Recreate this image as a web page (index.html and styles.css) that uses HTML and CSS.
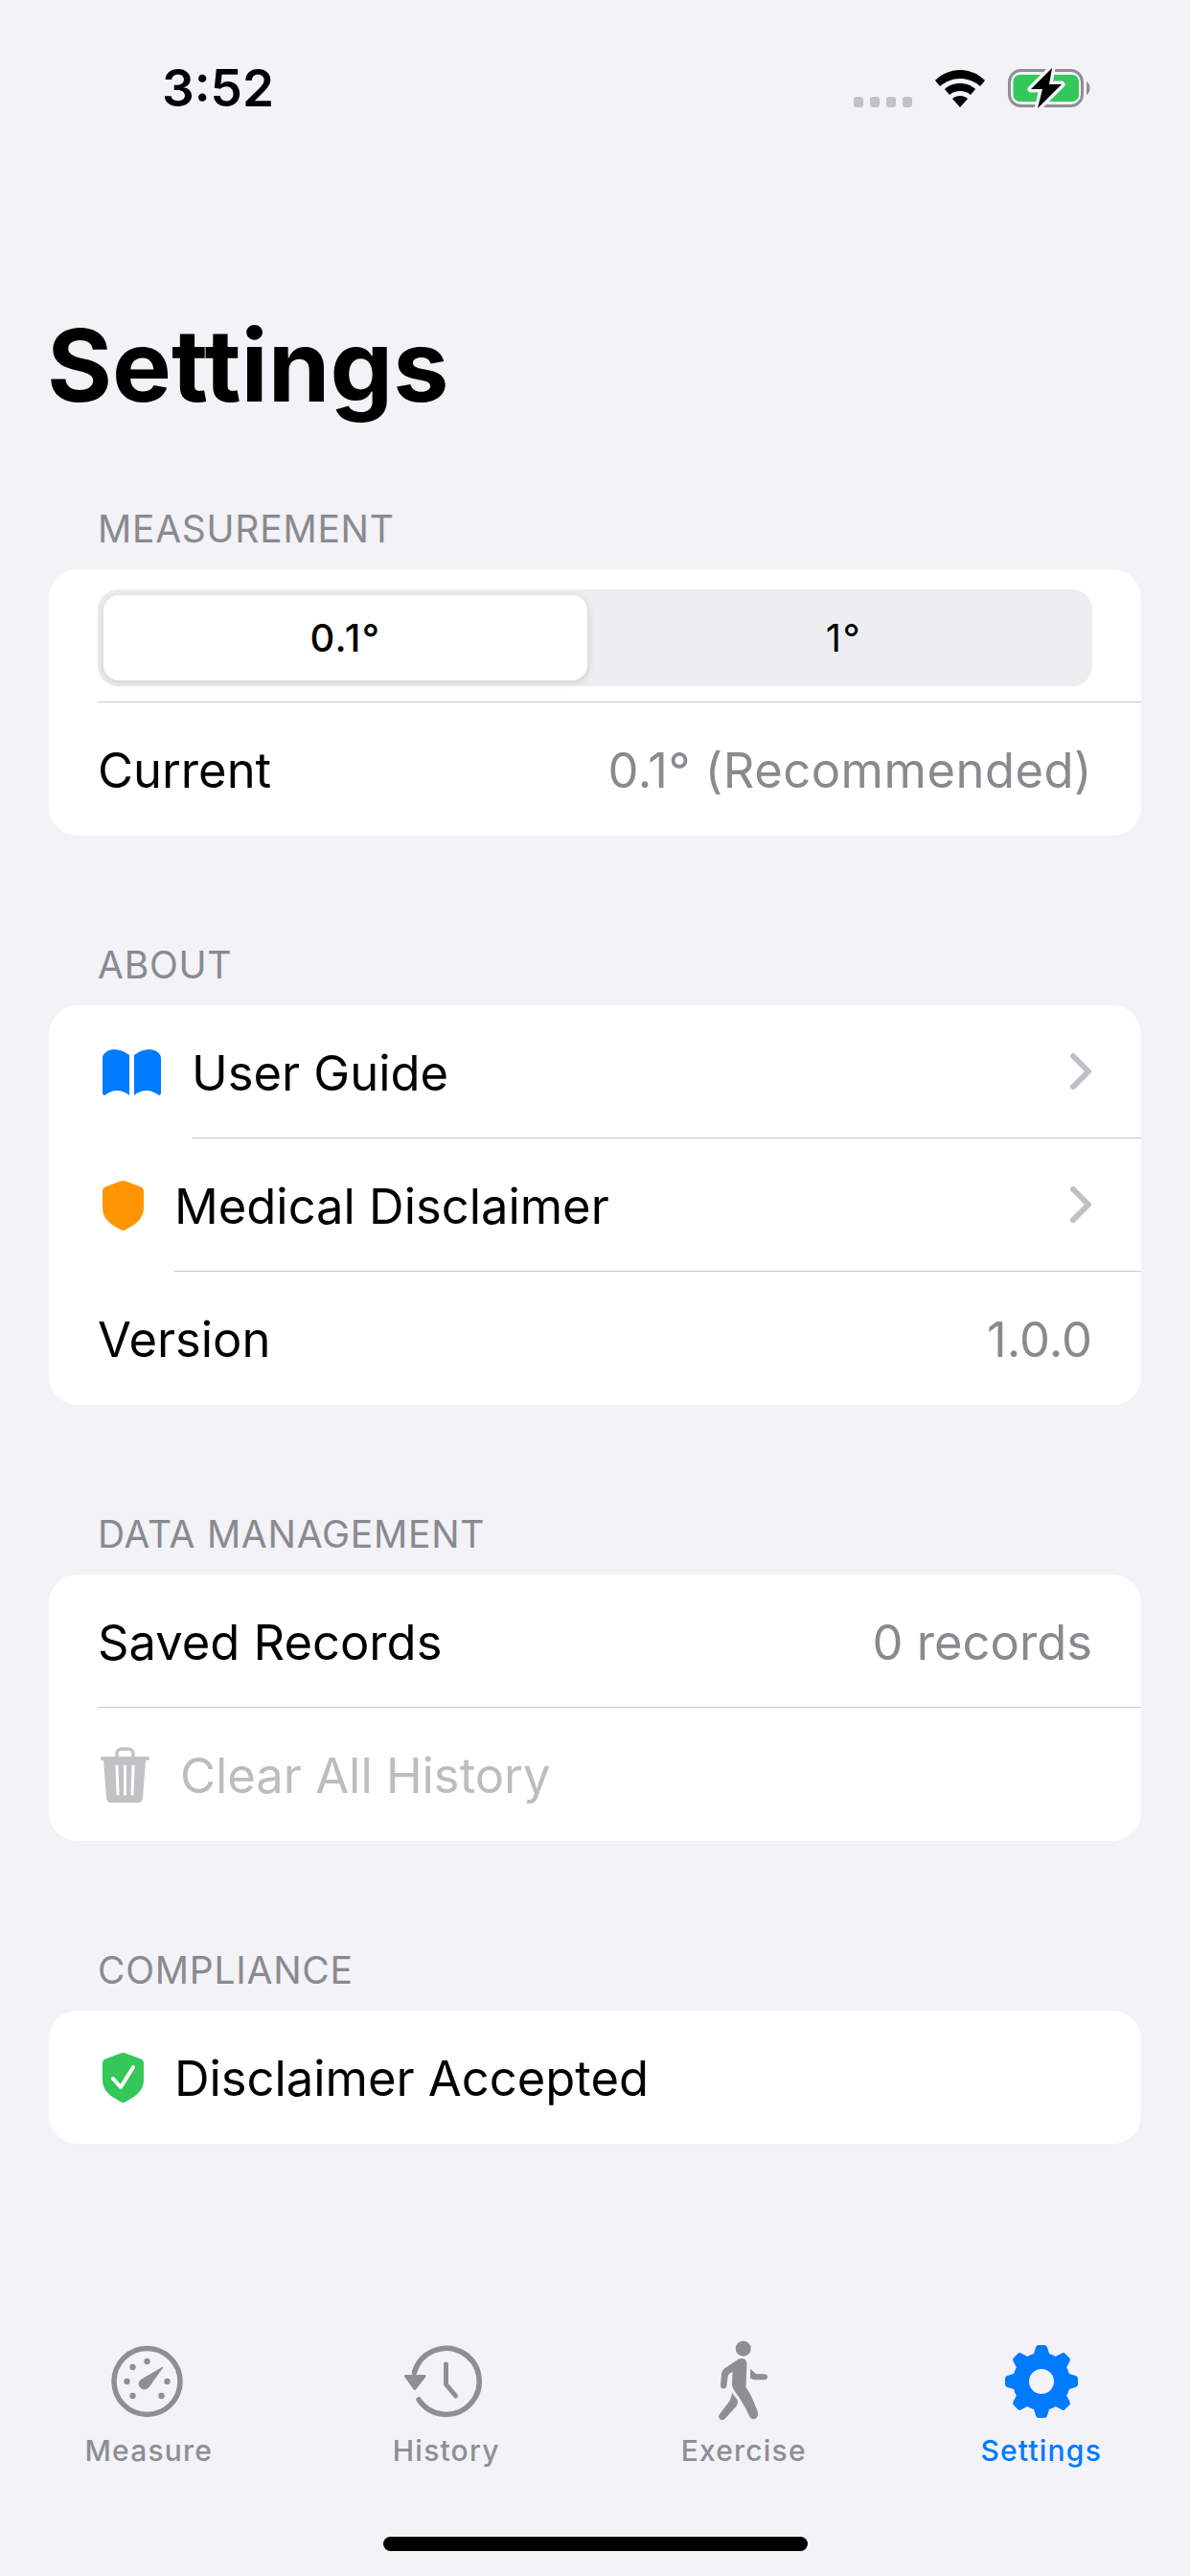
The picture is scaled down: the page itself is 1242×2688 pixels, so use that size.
FILE: index.html
```html
<!DOCTYPE html>
<html lang="en">
<head>
  <meta charset="UTF-8" />
  <title>Settings</title>
  <link rel="stylesheet" href="styles.css">
</head>
<body>
  <div class="statusBar">
    <span class="time">3:52</span>
    <div class="statusIcons">
      <div class="signal"><i></i><i></i><i></i><i></i></div>
      <svg class="wifi" viewBox="0 0 52 39">
        <path d="M26 0C16 0 7 4 0 11l5 6c6-5 13-8 21-8s15 3 21 8l5-6C45 4 36 0 26 0z"/>
        <path d="M26 14c-6 0-12 2-16 6l5 6c3-3 7-4 11-4s8 1 11 4l5-6c-4-4-10-6-16-6z"/>
        <path d="M26 27c-3 0-6 1-8 3l8 9 8-9c-2-2-5-3-8-3z"/>
      </svg>
      <svg class="battery" viewBox="0 0 86 42">
        <rect x="1.500" y="2.500" width="76" height="37" rx="12" fill="none" stroke="#8e8e93" stroke-width="3"/>
        <path d="M82 14c2 1 3.500 4 3.500 7s-1.500 6-3.500 7z" fill="#8e8e93"/>
        <rect x="5.500" y="7" width="68.500" height="28" rx="7" fill="#34c759"/>
        <path d="M46 0L24 22h12L31 42l25-25H43z" fill="#000" stroke="#f2f2f7" stroke-width="7" stroke-linejoin="round"/>
        <path d="M46 0L24 22h12L31 42l25-25H43z" fill="#000"/>
      </svg>
    </div>
  </div>

  <h1 class="title">Settings</h1>

  <section class="group">
    <h2 class="groupTitle">Measurement</h2>
    <div class="card">
      <div class="segmentRow">
        <div class="segment">
          <div class="segItem selected"><div class="segPill">0.1°</div></div>
          <div class="segItem">1°</div>
        </div>
      </div>
      <div class="row">
        <div class="rowBody topLine"><span>Current</span><span class="value wide">0.1° (Recommended)</span></div>
      </div>
    </div>
  </section>

  <section class="group">
    <h2 class="groupTitle">About</h2>
    <div class="card">
      <div class="row">
        <svg class="rowIcon book" viewBox="0 0 61 48">
          <path d="M28 6C23 2 18 0 12 0 6 0 0 4 0 9v36c0 2 1 3 2 3 4-3 8-5 13-5 5 0 10 2 13 5z"/>
          <path d="M33 6c5-4 10-6 16-6 6 0 12 4 12 9v36c0 2-1 3-2 3-4-3-8-5-13-5-5 0-10 2-13 5z"/>
        </svg>
        <div class="rowBody line">
          <span>User Guide</span>
          <svg class="chevron" viewBox="0 0 24 40"><path d="M4 4l16 16L4 36"/></svg>
        </div>
      </div>
      <div class="row">
        <svg class="rowIcon shield" viewBox="0 0 43 52">
          <path fill="#ff9500" d="M21.500 0c1 0 2 .3 3 .7l15 5.500c2.200.8 3.500 2.300 3.500 4.800v17c0 8-4 14-11 18.500l-9 5.200c-1 .4-2 .4-3 0l-9-5.200C4 42 0 36 0 28V11c0-2.500 1.300-4 3.500-4.800l15-5.500c1-.4 2-.7 3-.7z"/>
        </svg>
        <div class="rowBody line">
          <span>Medical Disclaimer</span>
          <svg class="chevron" viewBox="0 0 24 40"><path d="M4 4l16 16L4 36"/></svg>
        </div>
      </div>
      <div class="row">
        <div class="rowBody"><span>Version</span><span class="value">1.0.0</span></div>
      </div>
    </div>
  </section>

  <section class="group">
    <h2 class="groupTitle">Data Management</h2>
    <div class="card">
      <div class="row">
        <div class="rowBody line"><span>Saved Records</span><span class="value">0 records</span></div>
      </div>
      <div class="row">
        <svg class="rowIcon trash" viewBox="0 0 51 58">
          <path fill="none" stroke="#c2c2c4" stroke-width="3.500" d="M17 12V7c0-3 2-5 5-5h7c3 0 5 2 5 5v5"/>
          <path fill="#c2c2c4" d="M2 10h47c1.500 0 2 .8 2 2s-.5 2-2 2h-2l-3 39c-.2 3-2 5-5 5H11c-3 0-4.800-2-5-5L3 14H2c-1.500 0-2-.8-2-2s.5-2 2-2z"/>
          <path stroke="#fff" stroke-width="3" stroke-linecap="round" d="M17 20l1 29M25.500 20v29M34 20l-1 29"/>
        </svg>
        <div class="rowBody"><span class="disabled">Clear All History</span></div>
      </div>
    </div>
  </section>

  <section class="group">
    <h2 class="groupTitle">Compliance</h2>
    <div class="card">
      <div class="row">
        <svg class="rowIcon shield" viewBox="0 0 43 52">
          <path fill="#34c759" d="M21.500 0c1 0 2 .3 3 .7l15 5.500c2.200.8 3.500 2.300 3.500 4.800v17c0 8-4 14-11 18.500l-9 5.200c-1 .4-2 .4-3 0l-9-5.200C4 42 0 36 0 28V11c0-2.500 1.300-4 3.500-4.800l15-5.500c1-.4 2-.7 3-.7z"/>
          <path fill="none" stroke="#fff" stroke-width="4" stroke-linecap="round" stroke-linejoin="round" d="M11 27l8 9 13-21"/>
        </svg>
        <div class="rowBody"><span>Disclaimer Accepted</span></div>
      </div>
    </div>
  </section>

  <nav class="tabBar">
    <div class="tab">
      <svg class="tabIcon" viewBox="0 0 90 90">
        <circle cx="43.500" cy="45" r="34.500" fill="none" stroke="#8e8e93" stroke-width="5.500"/>
        <circle cx="43.500" cy="24" r="3.200"/><circle cx="28.500" cy="30" r="3.200"/>
        <circle cx="22.500" cy="45" r="3.200"/><circle cx="64.500" cy="45" r="3.200"/><circle cx="28.500" cy="60" r="3.200"/><circle cx="58.500" cy="60" r="3.200"/>
        <path d="M60 30L45.500 50.500c-2 3-6.500 3-8.500 1-2.500-2-2.500-6 0-8z" stroke="#8e8e93" stroke-width="1" stroke-linejoin="round"/>
      </svg>
      <span>Measure</span>
    </div>
    <div class="tab">
      <svg class="tabIcon" viewBox="0 0 90 90">
        <path fill="none" stroke="#8e8e93" stroke-width="5.500" stroke-linecap="round" d="M11.500 35.500A34.500 34.500 0 1 1 16 64"/>
        <path d="M2 38h20c1.500 0 2 1 1.500 2L13 53.500c-.6.800-1.600.8-2.200 0L1 40c-.5-1 0-2 1-2z"/>
        <path fill="none" stroke="#8e8e93" stroke-width="5" stroke-linecap="round" stroke-linejoin="round" d="M44.500 27v21l10 12"/>
      </svg>
      <span>History</span>
    </div>
    <div class="tab">
      <svg class="tabIcon" viewBox="0 0 90 90">
        <circle cx="44.750" cy="10.700" r="8"/>
        <path d="M40 21.500c4-1.500 8.500 0 8.500 5L47.500 51c5 7 8 14 12 25 1.200 3 .5 6.500-2.500 8-2.800 1-5-.5-6.200-3.500C47 72 42 63 36 55.500 33.500 52 33 50 33 47l.5-12C30 36 28.500 38 28.500 41l-1 8c0 2.500-1.500 3.500-3.500 3.500S21 51 21 48.500L22 38c.3-3 1-4.500 3-6.500z"/>
        <path d="M52 31.700l5 4.600c.8.700 1.500 1 2.500 1h7c2 0 3.500 1.200 3.500 3s-1.500 3-3.500 3H57c-2 0-3.500-.5-5-2z"/>
        <path d="M33 57c2 2.500 4 5 5.500 7 1 2.500.5 5-1.500 7.500L25.500 84c-1.500 1.500-3.500 1.500-5 .3s-2-3.500-.5-5L28.500 68c2.500-3 4-6.500 4.500-11z"/>
      </svg>
      <span>Exercise</span>
    </div>
    <div class="tab active">
      <svg class="tabIcon gear" viewBox="0 0 90 90">
        <circle cx="45" cy="45" r="21.500" fill="none" stroke="#007aff" stroke-width="17"/>
        <path d="M36 19l3-9.500Q39.500 7 42 7h6q2.500 0 3 2.500l3 9.500z"/>
        <path transform="rotate(45 45 45)" d="M36 19l3-9.500Q39.500 7 42 7h6q2.500 0 3 2.500l3 9.500z"/>
        <path transform="rotate(90 45 45)" d="M36 19l3-9.500Q39.500 7 42 7h6q2.500 0 3 2.500l3 9.500z"/>
        <path transform="rotate(135 45 45)" d="M36 19l3-9.500Q39.500 7 42 7h6q2.500 0 3 2.500l3 9.500z"/>
        <path transform="rotate(180 45 45)" d="M36 19l3-9.500Q39.500 7 42 7h6q2.500 0 3 2.500l3 9.500z"/>
        <path transform="rotate(225 45 45)" d="M36 19l3-9.500Q39.500 7 42 7h6q2.500 0 3 2.500l3 9.500z"/>
        <path transform="rotate(270 45 45)" d="M36 19l3-9.500Q39.500 7 42 7h6q2.500 0 3 2.500l3 9.500z"/>
        <path transform="rotate(315 45 45)" d="M36 19l3-9.500Q39.500 7 42 7h6q2.500 0 3 2.500l3 9.500z"/>
      </svg>
      <span>Settings</span>
    </div>
  </nav>

  <div class="homeIndicator"></div>
</body>
</html>
```

FILE: styles.css
```css
* {
  box-sizing: border-box;
}
body {
  margin: 0;
  height: 2688px;
  overflow: hidden;
  display: flex;
  flex-direction: column;
  background: #f2f2f7;
  color: #000;
  font-family: 'Inter', 'Liberation Sans', sans-serif;
  font-size: 50.7px;
}
.statusBar {
  display: flex;
  justify-content: space-between;
  align-items: flex-start;
  height: 116px;
  padding: 62px 104px 0 169px;
}
.time {
  font-size: 53px;
  font-weight: 600;
  line-height: 60px;
}
.statusIcons {
  display: flex;
  align-items: flex-end;
  gap: 24px;
  height: 51px;
}
.signal {
  display: flex;
  gap: 7px;
  margin-bottom: 1px;
}
.signal i {
  display: block;
  width: 10px;
  height: 11px;
  border-radius: 3px;
  background: #c1c1c6;
}
.wifi {
  width: 52px;
  height: 39px;
  margin-bottom: 1px;
}
.battery {
  width: 86px;
  height: 42px;
}
.title {
  margin: 0;
  padding: 203px 0 0 49px;
  font-size: 104px;
  font-weight: 700;
  line-height: 124px;
}
.group {
  margin: 0 51px 110px;
}
.title + .group {
  margin-top: 84px;
}
.groupTitle {
  margin: 0 0 19px 51px;
  padding-top: 2px;
  font-size: 39px;
  font-weight: 400;
  line-height: 46px;
  letter-spacing: 0.75px;
  color: #8a8a8e;
  text-transform: uppercase;
}
.card {
  background: #fff;
  border-radius: 30px;
  overflow: hidden;
}
.segmentRow {
  padding: 21px 51px 16px;
}
.segment {
  display: flex;
  height: 101px;
  background: #eeeef0;
  border-radius: 21px;
}
.segItem {
  flex: 1 1 50%;
  display: flex;
  align-items: center;
  justify-content: center;
  font-size: 40px;
  letter-spacing: 1.5px;
}
.segItem.selected {
  padding: 6px 8px 6px 6px;
}
.segPill {
  width: 100%;
  height: 100%;
  display: flex;
  align-items: center;
  justify-content: center;
  background: #fff;
  border-radius: 16px;
  font-weight: 500;
  box-shadow: 0 2px 9px rgba(0,0,0,0.15);
}
.row {
  display: flex;
  align-items: center;
  padding-left: 51px;
}
.rowBody {
  flex: 1;
  height: 139px;
  display: flex;
  align-items: center;
  justify-content: space-between;
  padding: 2px 51px 0 0;
}
.topLine {
  height: 140px;
  border-top: 1px solid #c6c6c8;
}
.line {
  border-bottom: 1px solid #c6c6c8;
}
.value {
  color: #8a8a8e;
}
.wide {
  letter-spacing: 0.5px;
}
.disabled {
  color: #bdbdbf;
}
.rowIcon {
  flex: none;
  margin: 0 32px 0 5px;
}
.book {
  width: 61px;
  height: 48px;
  fill: #007aff;
}
.shield {
  width: 43px;
  height: 52px;
}
.trash {
  width: 51px;
  height: 58px;
  margin-left: 3px;
}
.chevron {
  width: 24px;
  height: 40px;
  margin-top: -2px;
  fill: none;
  stroke: #c0c0c4;
  stroke-width: 6;
  stroke-linecap: round;
  stroke-linejoin: round;
}
.tabBar {
  display: flex;
  margin-top: auto;
  padding-bottom: 72px;
}
.tab {
  flex: 1;
  display: flex;
  flex-direction: column;
  align-items: center;
  font-size: 30px;
  font-weight: 500;
  line-height: 36px;
  color: #8e8e93;
  letter-spacing: 1.2px;
}
.tab.active {
  color: #007aff;
}
.tabIcon {
  width: 90px;
  height: 90px;
  margin-bottom: 9px;
  fill: #8e8e93;
}
.gear {
  fill: #007aff;
}
.homeIndicator {
  align-self: center;
  flex: none;
  width: 443px;
  height: 15px;
  margin-bottom: 26px;
  border-radius: 8px;
  background: #000;
}
```
